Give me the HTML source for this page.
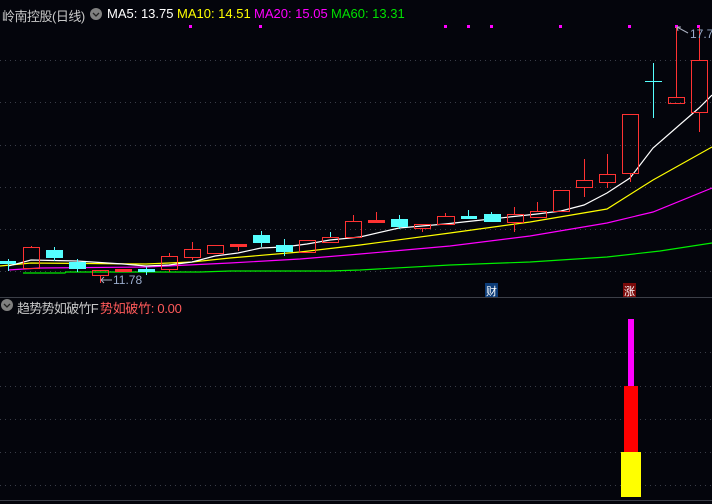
<!DOCTYPE html><html><head><meta charset="utf-8"><style>
body{margin:0;background:#04050c;width:712px;height:504px;overflow:hidden;position:relative;font-family:"Liberation Sans","Noto Sans CJK SC",sans-serif}
.t{position:absolute;font-size:13px;white-space:nowrap}
</style></head><body>
<svg width="712" height="504" style="position:absolute;left:0;top:0">
<g stroke="#3a3d48" stroke-dasharray="1 4" stroke-width="1">
<line x1="0" y1="60.5" x2="712" y2="60.5"/><line x1="0" y1="102.5" x2="712" y2="102.5"/><line x1="0" y1="145.5" x2="712" y2="145.5"/><line x1="0" y1="187.5" x2="712" y2="187.5"/><line x1="0" y1="229.5" x2="712" y2="229.5"/><line x1="0" y1="271.5" x2="712" y2="271.5"/>
<line x1="0" y1="352.5" x2="712" y2="352.5"/><line x1="0" y1="386.5" x2="712" y2="386.5"/><line x1="0" y1="419.5" x2="712" y2="419.5"/><line x1="0" y1="452.5" x2="712" y2="452.5"/><line x1="0" y1="485.5" x2="712" y2="485.5"/>
</g>
<line x1="0" y1="297.5" x2="712" y2="297.5" stroke="#3c3f48"/>
<line x1="0" y1="500.5" x2="712" y2="500.5" stroke="#3c3f48"/>
<g fill="#ff00ff"><rect x="189" y="25" width="3" height="3"/><rect x="259" y="25" width="3" height="3"/><rect x="444" y="25" width="3" height="3"/><rect x="467" y="25" width="3" height="3"/><rect x="490" y="25" width="3" height="3"/><rect x="559" y="25" width="3" height="3"/><rect x="628" y="25" width="3" height="3"/><rect x="675" y="25" width="3" height="3"/><rect x="697" y="25" width="3" height="3"/></g>
<g fill="none" stroke-width="1.2">
<polyline stroke="#00ee00" points="23,273 65,273 66,272 200,272 230,271 330,271 360,270 450,265 530,262 607,257 660,251 712,243"/>
<polyline stroke="#ff00ff" points="8,270 40,268 146,267 230,263 300,259 360,254 450,246 530,236 607,223 653,212 712,188"/>
<polyline stroke="#ffff00" points="0,266 31,263 146,264 192,262 230,258 300,252 360,245 450,233 530,222 607,209 653,180 712,147"/>
<polyline stroke="#ffffff" points="8,266 20,263 31,260 77,261 123,264 146,266 169,265 192,262 215,256 238,253 261,248 284,247 307,244 330,240 360,237 399,228 445,224 491,219 537,214 561,211 584,205 607,193 630,178 653,148 676,128 699,108 712,95"/>
</g>
<g stroke="#ff3232" fill="none">
<path d="M31.5 246V247M100.5 275V283M192.5 242V249M192.5 257V260M169.5 253V256M169.5 269V272M238.5 247V251M353.5 215V221M376.5 212V220M422.5 228V232M445.5 213V216M514.5 207V214M514.5 222V232M537.5 202V211M584.5 159V180M584.5 187V197M607.5 154V174M607.5 182V188M630.5 173V182M676.5 27V97M699.5 27V60M699.5 112V132"/>
<rect x="23.5" y="247.5" width="16" height="21"/><rect x="92.5" y="270.5" width="16" height="5"/><rect x="161.5" y="256.5" width="16" height="13"/><rect x="184.5" y="249.5" width="16" height="8"/><rect x="207.5" y="245.5" width="16" height="8"/><rect x="299.5" y="240.5" width="16" height="12"/><rect x="322.5" y="237.5" width="16" height="5"/><rect x="345.5" y="221.5" width="16" height="16"/><rect x="414.5" y="224.5" width="16" height="4"/><rect x="437.5" y="216.5" width="17" height="8"/><rect x="507.5" y="214.5" width="16" height="8"/><rect x="530.5" y="211.5" width="16" height="6"/><rect x="553.5" y="190.5" width="16" height="21"/><rect x="576.5" y="180.5" width="16" height="7"/><rect x="599.5" y="174.5" width="16" height="8"/><rect x="622.5" y="114.5" width="16" height="59"/><rect x="668.5" y="97.5" width="16" height="6"/><rect x="691.5" y="60.5" width="16" height="52"/>
</g>
<g fill="#ff3232"><rect x="115" y="269" width="17" height="3"/><rect x="230" y="244" width="17" height="3"/><rect x="368" y="220" width="17" height="3"/></g>
<g stroke="#55ffff"><path d="M8.5 259V271M54.5 247V261M77.5 259V272M146.5 267V275M261.5 231V247M284.5 239V256M330.5 232V237M399.5 215V229M468.5 210V216M491.5 212V214M653.5 63V118M645 81.5H662"/></g>
<g fill="#55ffff"><rect x="0" y="261" width="16" height="3"/><rect x="46" y="250" width="17" height="8"/><rect x="69" y="262" width="17" height="7"/><rect x="138" y="269" width="17" height="3"/><rect x="253" y="235" width="17" height="8"/><rect x="276" y="245" width="17" height="7"/><rect x="391" y="219" width="17" height="8"/><rect x="461" y="216" width="16" height="3"/><rect x="484" y="214" width="17" height="8"/></g>
<g stroke="#aab0c0" fill="none"><path d="M101 280H112M101 280L104 277M101 280L104 283"/><path d="M677 27L688 33M677 27L678 31M677 27L681 27"/></g>
<rect x="628" y="319" width="6" height="67" fill="#ff00ff"/>
<rect x="624" y="386" width="14" height="66" fill="#ff0000"/>
<rect x="621" y="452" width="20" height="45" fill="#ffff00"/>
<circle cx="96" cy="14" r="6" fill="#808080"/><path d="M93 13L96 16L99 13" stroke="#222" fill="none" stroke-width="1.3"/>
<circle cx="7" cy="305" r="6" fill="#808080"/><path d="M4 304L7 307L10 304" stroke="#222" fill="none" stroke-width="1.3"/>
<rect x="485" y="283" width="13" height="14" fill="#0c3c78"/>
<rect x="623" y="283" width="13" height="14" fill="#7a0a0a"/>
</svg>
<div class="t" style="left:2px;top:6px;color:#c8c8c8;letter-spacing:-0.5px">岭南控股(日线)</div>
<div class="t" style="left:107px;top:6px;color:#ffffff">MA5: 13.75</div>
<div class="t" style="left:177px;top:6px;color:#ffff00">MA10: 14.51</div>
<div class="t" style="left:254px;top:6px;color:#ff00ff">MA20: 15.05</div>
<div class="t" style="left:331px;top:6px;color:#00e000">MA60: 13.31</div>
<div class="t" style="left:113px;top:273px;color:#9aaccc;font-size:12px">11.78</div>
<div class="t" style="left:690px;top:27px;color:#9aaccc;font-size:12px">17.7</div>
<div class="t" style="left:486px;top:283px;color:#fff;font-size:11px">财</div>
<div class="t" style="left:624px;top:283px;color:#fff;font-size:11px">涨</div>
<div class="t" style="left:17px;top:298px;color:#c8c8c8;letter-spacing:-0.7px">趋势势如破竹F</div>
<div class="t" style="left:100px;top:298px;color:#ff5a5a;letter-spacing:-0.3px">势如破竹: 0.00</div>
</body></html>
